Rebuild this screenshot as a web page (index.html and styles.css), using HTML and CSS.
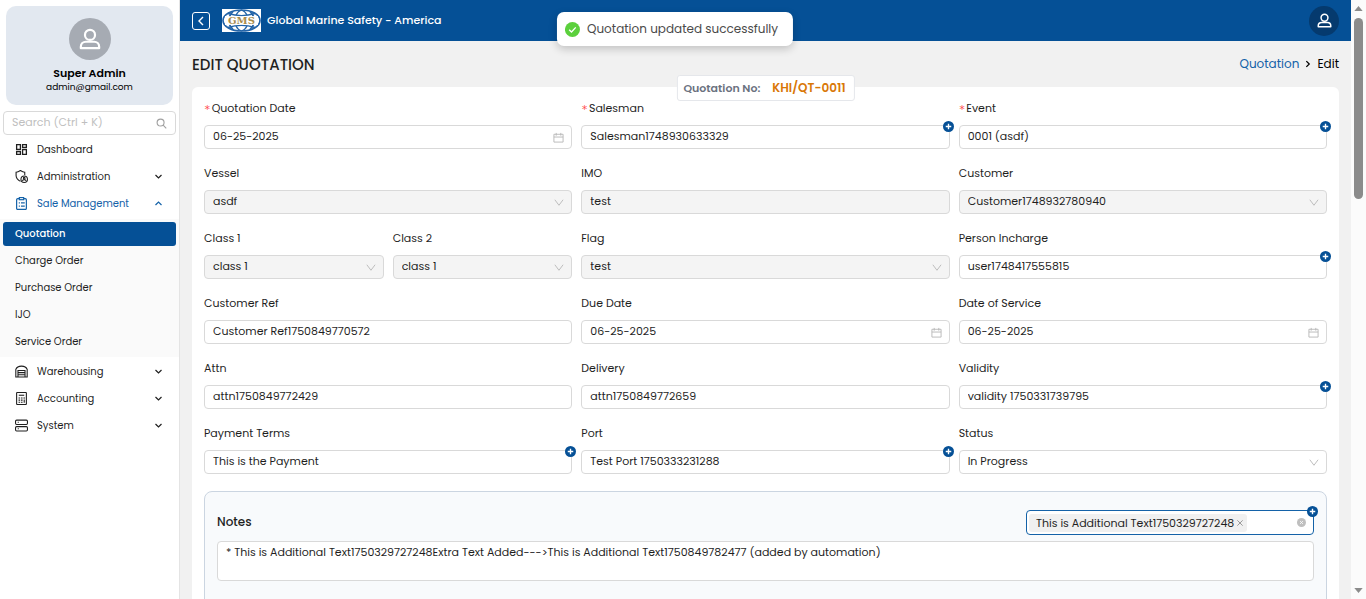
FILE: index.html
```html
<!DOCTYPE html>
<html lang="en">
<head>
<meta charset="utf-8">
<meta name="viewport" content="width=device-width, initial-scale=1">
<title>Edit Quotation</title>
<link rel="stylesheet" href="styles.css">
</head>
<body>
<svg class="sprite" aria-hidden="true">
  <symbol id="user" viewBox="0 0 24 24"><g fill="none" stroke="currentColor" stroke-width="2.400"><circle cx="12" cy="7.500" r="5.500"/><path d="M2 22v-1.500C2 17 4.500 15 7.500 15h9c3 0 5.500 2 5.500 5.500V22z" stroke-linejoin="round"/></g></symbol>
  <symbol id="down" viewBox="0 0 12 12"><path d="M2 4l4 4 4-4" fill="none" stroke="currentColor" stroke-width="1.600"/></symbol>
  <symbol id="up" viewBox="0 0 12 12"><path d="M2 8l4-4 4 4" fill="none" stroke="currentColor" stroke-width="1.600"/></symbol>
  <symbol id="arrow" viewBox="0 0 12 12"><path d="M2 3l4.500 6L11 3" fill="none" stroke="currentColor" stroke-width="1"/></symbol>
  <symbol id="plus" viewBox="0 0 12 12"><circle cx="6" cy="6" r="6" fill="#055096"/><path d="M6 3v6M3 6h6" stroke="#fff" stroke-width="1.500"/></symbol>
  <symbol id="calendar" viewBox="0 0 12 12"><path d="M1 2.500h10v8.500H1zM1 5.500h10M3.500 1v3M8.500 1v3" fill="none" stroke="currentColor"/></symbol>
</svg>
<div class="app">
  <aside class="sidebar">
    <div class="profile">
      <span class="avatar"><svg><use href="#user"/></svg></span>
      <strong class="profile-name">Super Admin</strong>
      <span class="profile-mail">admin@gmail.com</span>
    </div>
    <label class="search">
      <input type="text" placeholder="Search (Ctrl + K)" aria-label="Search">
      <svg viewBox="0 0 12 12"><g fill="none" stroke="currentColor" stroke-width="1.200"><circle cx="5" cy="5" r="3.800"/><path d="M7.800 7.800l3.400 3.400"/></g></svg>
    </label>
    <nav class="menu">
      <a class="item" href="#"><svg class="icon" viewBox="0 0 24 24"><path d="M3 3h7v9H3zM14 3h7v5h-7zM14 12h7v9h-7zM3 16h7v5H3z" fill="none" stroke="currentColor" stroke-width="2.400"/></svg><span>Dashboard</span></a>
      <button class="item" type="button"><svg class="icon" viewBox="0 0 24 24"><g fill="none" stroke="currentColor" stroke-width="2"><path d="M10 21C5 18 2 15 2 10V4c3 0 5-1 8-3 3 2 5 3 8 3v5"/><circle cx="17" cy="17" r="6"/><circle cx="17" cy="15" r="1.500"/><path d="M13.500 20c1-3 6-3 7 0"/></g></svg><span>Administration</span><svg class="caret"><use href="#down"/></svg></button>
      <button class="item open" type="button"><svg class="icon" viewBox="0 0 24 24"><g fill="none" stroke="currentColor" stroke-width="2.200"><rect x="3" y="3" width="18" height="20" rx="2"/><rect x="8" y="1" width="8" height="4" fill="#fff"/><path d="M7 11h2M11 11h7M7 17h2M11 17h7"/></g></svg><span>Sale Management</span><svg class="caret"><use href="#up"/></svg></button>
      <div class="submenu">
        <a class="sub current" href="#">Quotation</a>
        <a class="sub" href="#">Charge Order</a>
        <a class="sub" href="#">Purchase Order</a>
        <a class="sub" href="#">IJO</a>
        <a class="sub" href="#">Service Order</a>
      </div>
      <button class="item" type="button"><svg class="icon" viewBox="0 0 24 24"><path d="M1.500 22V8C3 4 7 2 12 2s9 2 10.500 6v14h-4V10h-13v12zM6 10h12M6 14h12M6 18h12M6 22h12" fill="none" stroke="currentColor" stroke-width="2"/></svg><span>Warehousing</span><svg class="caret"><use href="#down"/></svg></button>
      <button class="item" type="button"><svg class="icon" viewBox="0 0 24 24"><g fill="none" stroke="currentColor" stroke-width="2"><rect x="3" y="1" width="18" height="22" rx="1"/><path d="M7 6h10"/><path d="M6.500 11h3M11 11h3M15.500 11h3M6.500 15h3M11 15h3M6.500 19h3M11 19h3M17 14v6"/></g></svg><span>Accounting</span><svg class="caret"><use href="#down"/></svg></button>
      <button class="item" type="button"><svg class="icon" viewBox="0 0 24 24"><g fill="none" stroke="currentColor" stroke-width="2"><rect x="1" y="2" width="22" height="8" rx="2"/><rect x="1" y="14" width="22" height="8" rx="2"/><path d="M5 6h2M5 18h2"/></g></svg><span>System</span><svg class="caret"><use href="#down"/></svg></button>
    </nav>
  </aside>

  <div class="main">
    <header class="topbar">
      <button class="collapse" type="button" aria-label="Collapse menu"><svg viewBox="0 0 12 12"><path d="M8 2L4 6l4 4" fill="none" stroke="currentColor" stroke-width="1.400"/></svg></button>
      <svg class="logo" viewBox="0 0 39 23" role="img" aria-label="GMS">
        <path d="M0 0h39v23H0z" fill="#fff"/>
        <g fill="none" stroke="#2364a8"><g stroke-width="1.700"><ellipse cx="19.500" cy="11.500" rx="18.500" ry="10.500"/><path d="M11 2.500c-2 2-3 3.500-3.500 5M28 2.500c2 2 3 3.500 3.500 5M11 20.500c-2-2-3-3.500-3.500-5M28 20.500c2-2 3-3.500 3.500-5"/></g><path d="M14 6c1-2 2-4 5.500-5 3.500 1 4.500 3 5.500 5M14 17c1 2 2 4 5.500 5 3.500-1 4.500-3 5.500-5" stroke-width="1.300"/><path d="M6 4.500c8 2.500 19 2.500 27 0M6 18.500c8-2.500 19-2.500 27 0" stroke-width="1.400"/></g>
        <path d="M3 7c11 .7 22 .7 33 0v9c-11-.7-22-.7-33 0z" fill="#fff"/>
        <text class="logo-text" x="19.500" y="15" text-anchor="middle">GMS</text>
      </svg>
      <span class="company">Global Marine Safety - America</span>
      <button class="account" type="button" aria-label="Account"><svg><use href="#user"/></svg></button>
    </header>
    <main class="content">
      <div class="heading">
        <h1>EDIT QUOTATION</h1>
        <nav class="crumbs"><a href="#">Quotation</a><svg viewBox="0 0 12 12"><path d="M4 2.500L7.500 6 4 9.500" fill="none" stroke="currentColor" stroke-width="1.500"/></svg><span>Edit</span></nav>
      </div>
      <form class="card">
        <div class="number"><span>Quotation No:</span><b>KHI/QT-0011</b></div>
        <div class="grid">
          <div class="field"><label class="required" for="date">Quotation Date</label><div class="control"><input id="date" value="06-25-2025"><svg><use href="#calendar"/></svg></div></div>
          <div class="field"><label class="required" for="salesman">Salesman</label><div class="control"><select id="salesman"><option>Salesman1748930633329</option></select><button class="add" type="button" aria-label="Add salesman"><svg><use href="#plus"/></svg></button></div></div>
          <div class="field"><label class="required" for="event">Event</label><div class="control"><select id="event"><option>0001 (asdf)</option></select><button class="add" type="button" aria-label="Add event"><svg><use href="#plus"/></svg></button></div></div>

          <div class="field"><label for="vessel">Vessel</label><div class="control off"><select id="vessel" disabled><option>asdf</option></select><svg><use href="#arrow"/></svg></div></div>
          <div class="field"><label for="imo">IMO</label><div class="control off"><input id="imo" value="test" disabled></div></div>
          <div class="field"><label for="customer">Customer</label><div class="control off"><select id="customer" disabled><option>Customer1748932780940</option></select><svg><use href="#arrow"/></svg></div></div>

          <div class="pair">
            <div class="field"><label for="class1">Class 1</label><div class="control off"><select id="class1" disabled><option>class 1</option></select><svg><use href="#arrow"/></svg></div></div>
            <div class="field"><label for="class2">Class 2</label><div class="control off"><select id="class2" disabled><option>class 1</option></select><svg><use href="#arrow"/></svg></div></div>
          </div>
          <div class="field"><label for="flag">Flag</label><div class="control off"><select id="flag" disabled><option>test</option></select><svg><use href="#arrow"/></svg></div></div>
          <div class="field"><label for="person">Person Incharge</label><div class="control"><select id="person"><option>user1748417555815</option></select><button class="add" type="button" aria-label="Add person"><svg><use href="#plus"/></svg></button></div></div>

          <div class="field"><label for="ref">Customer Ref</label><div class="control"><input id="ref" value="Customer Ref1750849770572"></div></div>
          <div class="field"><label for="due">Due Date</label><div class="control"><input id="due" value="06-25-2025"><svg><use href="#calendar"/></svg></div></div>
          <div class="field"><label for="service">Date of Service</label><div class="control"><input id="service" value="06-25-2025"><svg><use href="#calendar"/></svg></div></div>

          <div class="field"><label for="attn">Attn</label><div class="control"><input id="attn" value="attn1750849772429"></div></div>
          <div class="field"><label for="delivery">Delivery</label><div class="control"><input id="delivery" value="attn1750849772659"></div></div>
          <div class="field"><label for="validity">Validity</label><div class="control"><select id="validity"><option>validity 1750331739795</option></select><button class="add" type="button" aria-label="Add validity"><svg><use href="#plus"/></svg></button></div></div>

          <div class="field"><label for="terms">Payment Terms</label><div class="control"><select id="terms"><option>This is the Payment</option></select><button class="add" type="button" aria-label="Add payment terms"><svg><use href="#plus"/></svg></button></div></div>
          <div class="field"><label for="port">Port</label><div class="control"><select id="port"><option>Test Port 1750333231288</option></select><button class="add" type="button" aria-label="Add port"><svg><use href="#plus"/></svg></button></div></div>
          <div class="field"><label for="status">Status</label><div class="control"><select id="status"><option>In Progress</option></select><svg><use href="#arrow"/></svg></div></div>
        </div>
        <section class="notes">
          <div class="notes-head">
            <label for="notes">Notes</label>
            <div class="control tags">
              <span class="tag">This is Additional Text1750329727248<button type="button" aria-label="Remove"><svg viewBox="0 0 12 12"><path d="M2 2l8 8M10 2l-8 8" stroke="currentColor" stroke-width="1.300"/></svg></button></span>
              <input type="text" aria-label="Choose notes">
              <button class="clear" type="button" aria-label="Clear"><svg viewBox="0 0 12 12"><circle cx="6" cy="6" r="6" fill="#bfbfbf"/><path d="M4 4l4 4M8 4l-4 4" stroke="#fff"/></svg></button>
              <button class="add" type="button" aria-label="Add note"><svg><use href="#plus"/></svg></button>
            </div>
          </div>
          <textarea id="notes" rows="2">* This is Additional Text1750329727248Extra Text Added---&gt;This is Additional Text1750849782477 (added by automation)</textarea>
        </section>
      </form>
    </main>
  </div>
  <div class="scroll" aria-hidden="true">
    <svg viewBox="0 0 10 6"><path d="M0 6l5-6 5 6z" fill="currentColor"/></svg>
    <span class="thumb"></span>
    <svg viewBox="0 0 10 6"><path d="M0 0l5 6 5-6z" fill="currentColor"/></svg>
  </div>
</div>
<div class="toast" role="status"><svg viewBox="0 0 16 16"><circle cx="8" cy="8" r="8" fill="#5bd03c"/><path d="M4.500 8.200l2.500 2.500 4.500-5" fill="none" stroke="#fff" stroke-width="1.400"/></svg><span>Quotation updated successfully</span></div>
</body>
</html>
```

FILE: styles.css
```css
* { box-sizing: border-box; }
body {
  margin: 0;
  overflow: hidden;
  font: 11px/20px Poppins, Inter, sans-serif;
  color: #1f1f1f;
}
button, input, select, textarea { font: inherit; color: inherit; }
button { padding: 0; border: 0; background: none; cursor: pointer; }
a { color: inherit; text-decoration: none; }
svg { display: block; flex: none; }
.sprite { position: absolute; width: 0; height: 0; }

.app { display: flex; height: 100vh; background: #f1f1f1; }

.sidebar { flex: none; width: 180px; border-right: 1px solid #e4e4e4; background: #fff; }
.profile {
  display: flex;
  flex-direction: column;
  align-items: center;
  margin: 6px;
  padding: 12px 0 11px;
  border-radius: 10px;
  background: #e2e8f0;
  line-height: 14px;
  color: #000;
}
.avatar {
  display: grid;
  place-items: center;
  width: 42px;
  height: 42px;
  margin-bottom: 6px;
  border-radius: 50%;
  background: #a6abb3;
  color: #fff;
}
.avatar svg { width: 22px; height: 22px; }
.profile-name { font-weight: 600; }
.profile-mail { font-size: 9px; }
.search {
  display: flex;
  align-items: center;
  margin: 0 3px;
  padding: 0 8px;
  border: 1px solid #d9d9d9;
  border-radius: 4px;
  color: #a0a0a0;
}
.search input { flex: 1; min-width: 0; height: 22px; padding: 0 0 2px; border: 0; outline: 0; }
.search input::placeholder { color: #bfbfbf; }
.search svg { width: 11px; height: 11px; }

.menu { display: flex; flex-direction: column; padding-top: 1px; font-size: 10px; }
.item {
  display: flex;
  align-items: center;
  gap: 9px;
  height: 27px;
  padding: 0 16px 0 15px;
  text-align: left;
}
.item span { flex: 1; }
.icon { width: 13px; height: 13px; }
.caret { width: 9px; height: 9px; }
.open { color: #1462a8; }
.submenu { margin: 2px 0 1px; padding: 3px 3px 0; background: #fafafa; }
.sub { display: block; height: 24px; margin-bottom: 3px; padding: 0 12px; border-radius: 3px; line-height: 24px; }
.current { background: #055096; color: #fff; font-weight: 500; }

.main { flex: 1; min-width: 0; overflow: hidden; }
.topbar { display: flex; align-items: center; height: 41px; padding: 0 12px; background: #055096; color: #fff; }
.collapse { display: grid; place-items: center; width: 18px; height: 18px; border: 1px solid #fff; border-radius: 3px; }
.collapse svg { width: 12px; height: 12px; }
.logo { width: 39px; height: 23px; margin: 0 6px 0 12px; }
.logo-text { font: bold 10px "DejaVu Serif", serif; fill: #a88c4c; }
.company { flex: 1; padding-bottom: 2px; font-weight: 500; }
.account { display: grid; place-items: center; width: 30px; height: 30px; border-radius: 50%; background: #053a6e; }
.account svg { width: 15px; height: 15px; }

.content { padding: 12px; }
.heading { display: flex; justify-content: space-between; align-items: center; height: 22px; margin-bottom: 12px; }
h1 { margin: 0; padding-top: 2px; font-size: 15px; font-weight: 500; }
.crumbs { display: flex; align-items: center; gap: 4px; font-size: 12px; color: #000; }
.crumbs a { color: #1462a8; }
.crumbs svg { width: 10px; height: 10px; }

.card { position: relative; padding: 10px 12px 40px; border-radius: 6px; background: #fff; }
.number {
  position: absolute;
  top: -12px;
  left: 50%;
  display: flex;
  align-items: center;
  gap: 12px;
  height: 26px;
  padding: 0 8px 0 6px;
  border: 1px solid #e5e7eb;
  border-radius: 3px;
  background: #fff;
  transform: translateX(-50%);
  white-space: nowrap;
  font-weight: 600;
  color: #6b7280;
}
.number b { font-size: 12px; font-weight: 600; color: #d97706; }

.grid { display: grid; grid-template-columns: repeat(3, minmax(0, 1fr)); gap: 13px 9px; }
.pair { display: grid; grid-template-columns: repeat(2, minmax(0, 1fr)); gap: 9px; }
.field { display: flex; flex-direction: column; gap: 4px; min-width: 0; }
.field label { height: 24px; line-height: 23px; }
.required { display: flex; gap: 1px; }
.required::before { content: "*"; padding-top: 1px; font-family: "DejaVu Sans Mono", monospace; color: #ff4d4f; }
.control {
  position: relative;
  display: flex;
  align-items: center;
  border: 1px solid #d9d9d9;
  border-radius: 4px;
  background: #fff;
}
.control input, .control select {
  flex: 1;
  min-width: 0;
  height: 22px;
  padding: 0 8px 2px;
  border: 0;
  outline: 0;
  background: none;
  appearance: none;
  opacity: 1;
}
.control select { padding-bottom: 4px; }
.control > svg { width: 11px; height: 11px; margin-right: 7px; color: #b8b8b8; }
.off { background: #f4f4f4; }
.add { position: absolute; top: -5px; right: -5px; }
.add svg { width: 11px; height: 11px; }

.notes { margin-top: 17px; padding: 18px 12px 40px; border: 1px solid #cbd5e1; border-radius: 8px; background: #f8fafc; }
.notes-head { display: flex; justify-content: space-between; align-items: center; margin-bottom: 6px; }
.notes-head > label { padding-bottom: 2px; font-size: 12px; font-weight: 500; }
.tags { width: 288px; border-color: #1462a8; }
.tags input { height: 23px; }
.tag { display: flex; align-items: center; gap: 2px; margin-left: 2px; padding: 0 3px 0 7px; border-radius: 3px; background: #f0f0f0; line-height: 18px; white-space: nowrap; }
.tag svg { width: 8px; height: 8px; color: #8c8c8c; }
.clear { margin-right: 7px; }
.clear svg { width: 9px; height: 9px; }
.notes textarea {
  display: block;
  width: 100%;
  height: 40px;
  padding: 0 8px;
  border: 1px solid #d9d9d9;
  border-radius: 4px;
  resize: none;
  outline: 0;
}

.scroll { flex: none; display: flex; flex-direction: column; align-items: center; width: 15px; padding: 6px 0; background: #fbfbfb; color: #8b8b8b; }
.scroll svg { width: 9px; height: 5px; }
.thumb { width: 9px; height: 181px; margin: 7px 0 auto; border-radius: 5px; background: #8b8b8b; }

.toast {
  position: absolute;
  top: 12px;
  left: 50%;
  display: flex;
  align-items: center;
  gap: 7px;
  height: 34px;
  padding: 0 15px 0 8px;
  margin-left: -8px;
  border-radius: 7px;
  background: #fff;
  box-shadow: 0 3px 8px #0003;
  transform: translateX(-50%);
  white-space: nowrap;
  font-size: 12px;
  color: #4a4a4a;
}
.toast svg { width: 15px; height: 15px; }
```
